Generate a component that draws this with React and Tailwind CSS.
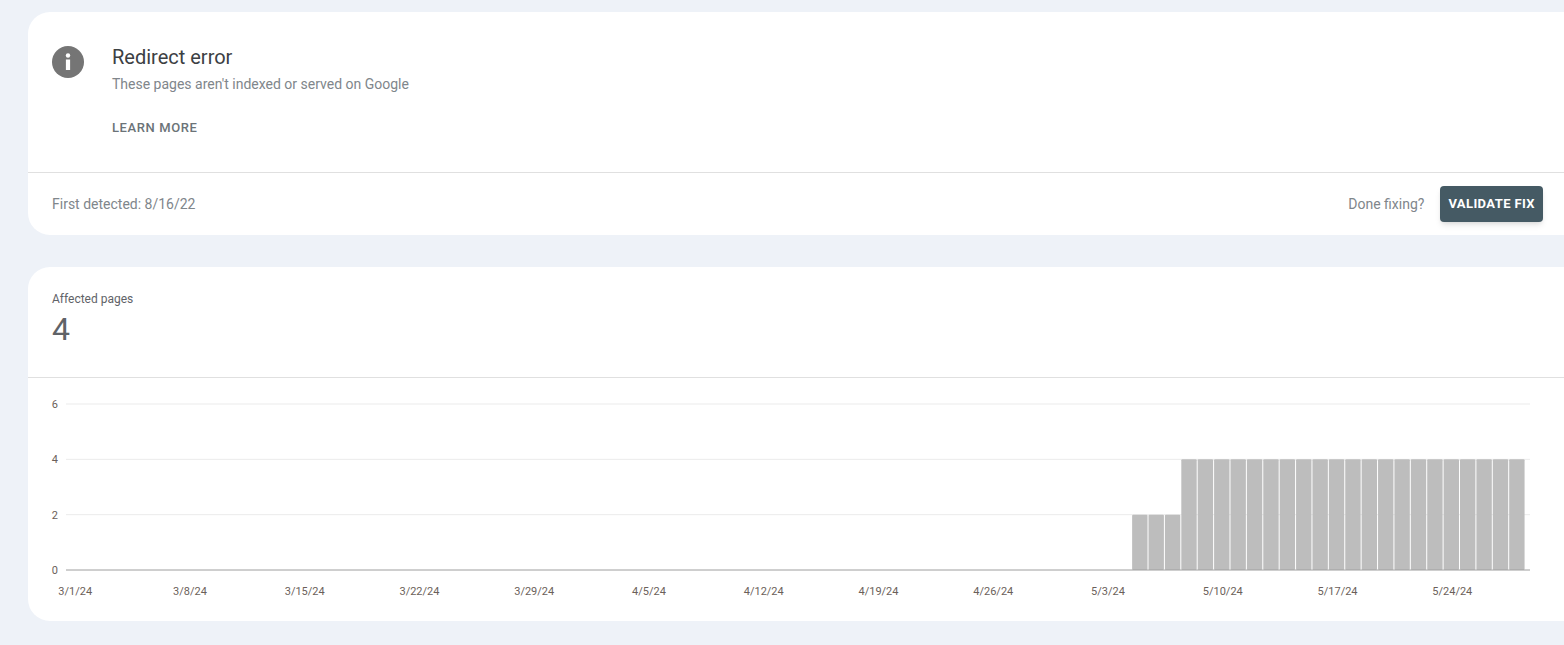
const labels = ['3/1/24', '3/8/24', '3/15/24', '3/22/24', '3/29/24', '4/5/24', '4/12/24', '4/19/24', '4/26/24', '5/3/24', '5/10/24', '5/17/24', '5/24/24'];

// 89 days, 3/1 .. 5/28
const values = Array.from({ length: 89 }, (_, i) => (i < 65 ? 0 : i < 68 ? 2 : 4));

const Chart = () => {
  const x0 = 38, w = 1464, dw = w / 89.3, base = 171, top = 5, h = base - top;
  const y = (v) => base - (v / 6) * h;
  return (
    <svg width="1512" height="200" className="block">
      {[6, 4, 2].map((v) => (
        <line key={v} x1={x0} x2={x0 + w} y1={y(v)} y2={y(v)} stroke="#ebebeb" />
      ))}
      {[6, 4, 2, 0].map((v) => (
        <text key={v} x={30} y={y(v) + 4} textAnchor="end" fontSize="11" fill="#6b5f5a" fontFamily="Roboto, sans-serif">{v}</text>
      ))}
      {values.map((v, i) =>
        v ? (
          <rect key={i} x={x0 + i * dw + 0.5} y={y(v)} width={dw - 1} height={base - y(v)} rx="1" fill="#bdbdbd" />
        ) : null
      )}
      <line x1={x0} x2={x0 + w} y1={base} y2={base} stroke="#9e9e9e" />
      {labels.map((l, i) => (
        <text key={l} x={x0 + (i * 7 + 0.5) * dw + 1} y={196} textAnchor="middle" fontSize="11" fill="#6b5f5a" fontFamily="Roboto, sans-serif">{l}</text>
      ))}
    </svg>
  );
};

export default function App() {
  return (
    <div className="min-h-[645px] bg-[#eef2f8] pt-3 pl-7 font-[Roboto]">
      <div className="bg-white rounded-[22px] -mr-5">
        <div className="flex pt-[34px] pl-6 pb-[34px]">
          <div className="w-8 h-8 rounded-full bg-[#757575] flex items-center justify-center">
            <svg width="6" height="18" viewBox="0 0 6 18">
              <circle cx="3" cy="2.5" r="2.2" fill="white" />
              <rect x="0.9" y="6.5" width="4.2" height="10.5" fill="white" />
            </svg>
          </div>
          <div className="ml-7">
            <div className="text-[20px] leading-6 text-[#3c4043] -mt-[1px]">Redirect error</div>
            <div className="text-sm text-[#80868b] mt-[5px]">These pages aren't indexed or served on Google</div>
            <div className="text-[13px] font-medium tracking-[0.6px] text-[#6b7378] mt-[24px]">LEARN MORE</div>
          </div>
        </div>
        <div className="border-t border-[#e0e0e0] flex items-center h-[63px] pl-6 pr-[41px]">
          <div className="text-sm text-[#80868b] flex-1">First detected: 8/16/22</div>
          <div className="text-sm text-[#80868b] mr-4">Done fixing?</div>
          <div className="bg-[#455a64] text-white text-[13px] font-bold tracking-[0.4px] px-2 h-9 flex items-center rounded shadow-md">VALIDATE FIX</div>
        </div>
      </div>
      <div className="bg-white rounded-[22px] -mr-5 mt-8 h-[354px]">
        <div className="pl-6 pt-[24px] h-[110px]">
          <div className="text-xs text-[#5f6368]">Affected pages</div>
          <div className="text-[32px] leading-10 text-[#5f6368] mt-[2px]">4</div>
        </div>
        <div className="border-t border-[#e0e0e0] pt-[21px]">
          <Chart />
        </div>
      </div>
    </div>
  );
}
